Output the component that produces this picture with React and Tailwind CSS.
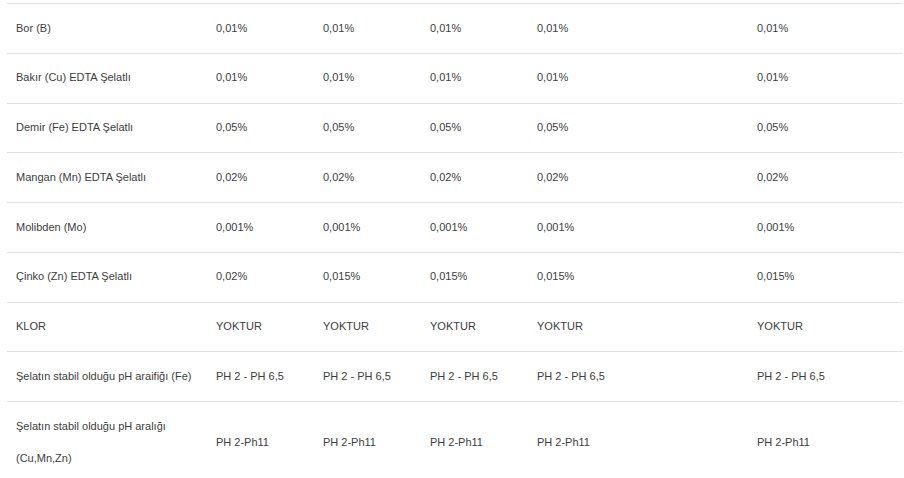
import React from 'react';

const rows = [
  { label: 'Bor (B)', values: ['0,01%', '0,01%', '0,01%', '0,01%', '0,01%'] },
  { label: 'Bakır (Cu) EDTA Şelatlı', values: ['0,01%', '0,01%', '0,01%', '0,01%', '0,01%'] },
  { label: 'Demir (Fe) EDTA Şelatlı', values: ['0,05%', '0,05%', '0,05%', '0,05%', '0,05%'] },
  { label: 'Mangan (Mn) EDTA Şelatlı', values: ['0,02%', '0,02%', '0,02%', '0,02%', '0,02%'] },
  { label: 'Molibden (Mo)', values: ['0,001%', '0,001%', '0,001%', '0,001%', '0,001%'] },
  { label: 'Çinko (Zn) EDTA Şelatlı', values: ['0,02%', '0,015%', '0,015%', '0,015%', '0,015%'] },
  { label: 'KLOR', values: ['YOKTUR', 'YOKTUR', 'YOKTUR', 'YOKTUR', 'YOKTUR'] },
  { label: 'Şelatın stabil olduğu pH araifiğı (Fe)', values: ['PH 2 - PH 6,5', 'PH 2 - PH 6,5', 'PH 2 - PH 6,5', 'PH 2 - PH 6,5', 'PH 2 - PH 6,5'] },
  { label: 'Şelatın stabil olduğu pH aralığı (Cu,Mn,Zn)', values: ['PH 2-Ph11', 'PH 2-Ph11', 'PH 2-Ph11', 'PH 2-Ph11', 'PH 2-Ph11'] },
];

const App = () => {
  return (
    <div className="h-[478px] overflow-hidden bg-white pt-[3px] pl-[7px] pr-px">
      <table
        className="table-fixed border-collapse text-[11px] leading-[32.75px] text-[#3d3d3d]"
        style={{ fontFamily: '"Liberation Sans", Arial, sans-serif' }}
      >
        <colgroup>
          <col className="w-[200px]" />
          <col className="w-[107px]" />
          <col className="w-[107px]" />
          <col className="w-[107px]" />
          <col className="w-[220px]" />
          <col className="w-[155px]" />
        </colgroup>
        <tbody>
          {rows.map((row) => (
            <tr key={row.label} className="border-t border-[#e2e2e2]">
              <td className="px-[9px] pt-[7.5px] pb-[8.5px] align-middle">{row.label}</td>
              {row.values.map((v, i) => (
                <td key={i} className="px-[9px] pt-[7.5px] pb-[8.5px] align-middle whitespace-nowrap">
                  {v}
                </td>
              ))}
            </tr>
          ))}
        </tbody>
      </table>
    </div>
  );
};

export default App;
